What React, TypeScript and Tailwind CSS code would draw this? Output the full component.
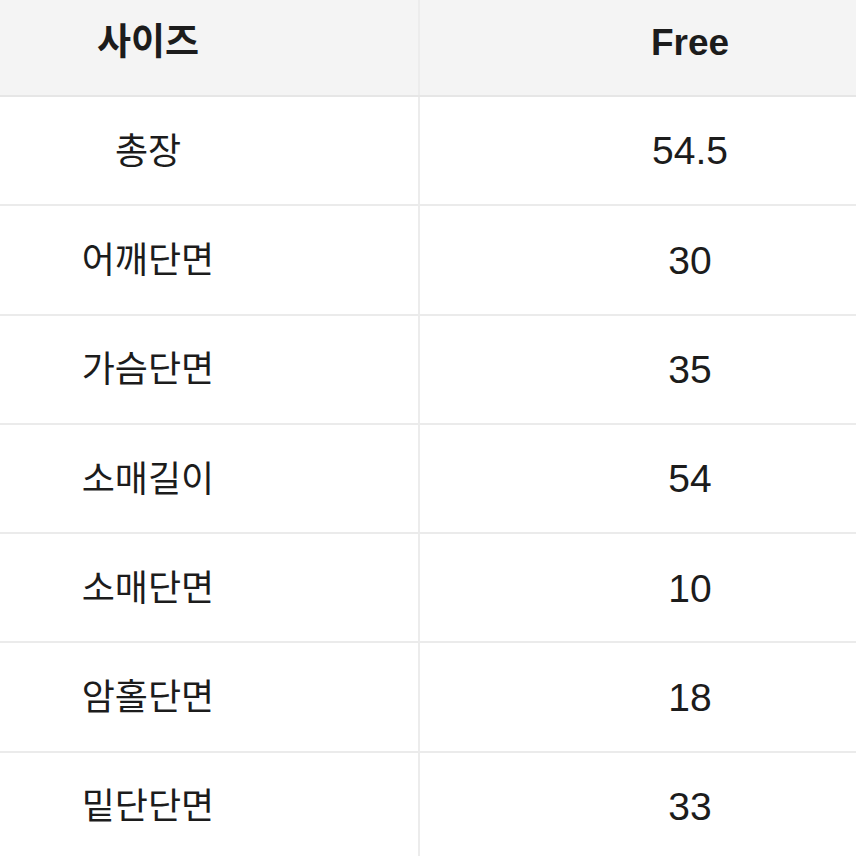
import React from "react";

const rows: [string, string][] = [
  ["총장", "54.5"],
  ["어깨단면", "30"],
  ["가슴단면", "35"],
  ["소매길이", "54"],
  ["소매단면", "10"],
  ["암홀단면", "18"],
  ["밑단단면", "33"],
];

export default function App() {
  return (
    <div
      className="w-[856px] h-[856px] overflow-hidden bg-white text-[#1c1c1c]"
      style={{ fontFamily: '"Liberation Sans", "Noto Sans CJK KR", sans-serif' }}
    >
      <div className="ml-[-122px] w-[1082px]">
        <div className="grid grid-cols-[542px_540px] h-[97px] bg-[#f4f4f4] border-b-2 border-[#e6e6e6]">
          <div className="flex items-center justify-center pb-[10px] border-r-2 border-[#ececec] text-[37px] font-bold">
            사이즈
          </div>
          <div className="flex items-center justify-center pb-[10px] text-[37px] font-bold">Free</div>
        </div>
        {rows.map(([k, v]) => (
          <div
            key={k}
            className="grid grid-cols-[542px_540px] h-[109.3px] border-b-2 border-[#ebebeb]"
          >
            <div className="flex items-center justify-center pt-[2px] border-r-2 border-[#ececec] text-[36px]">
              {k}
            </div>
            <div className="flex items-center justify-center pt-[2px] text-[39px]">{v}</div>
          </div>
        ))}
      </div>
    </div>
  );
}
